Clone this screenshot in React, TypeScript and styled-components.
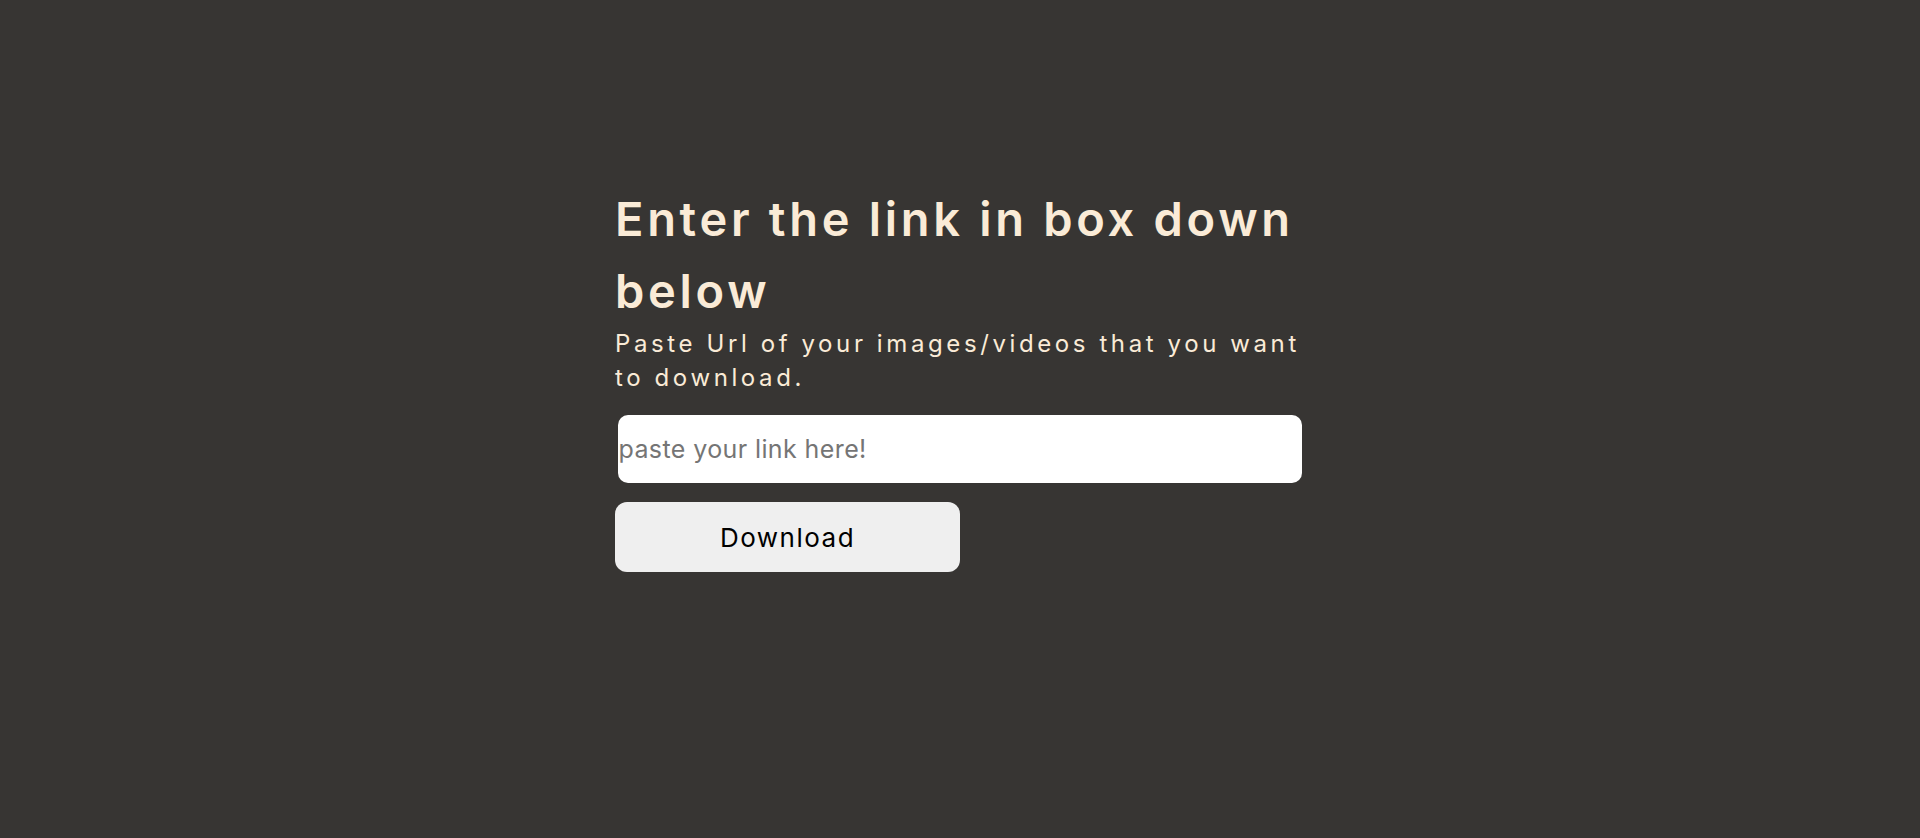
import styled, { createGlobalStyle } from 'styled-components';

const GlobalStyle = createGlobalStyle`
  html, body {
    margin: 0;
    padding: 0;
    background-color: #373533;
    font-family: Inter, 'Open Sans', sans-serif;
  }
`;

function App() {
  return (
    <>
      <GlobalStyle />
      <Page>
        <Container>
          <Title>Enter the link in box down below</Title>
          <Subtitle>Paste Url of your images/videos that you want to download.</Subtitle>
          <LinkInput type="text" placeholder="paste your link here!" />
          <DownloadBtn>Download</DownloadBtn>
        </Container>
      </Page>
    </>
  );
}

const Page = styled.main`
  min-height: 838px;
  padding-top: 183px;
  box-sizing: border-box;
`;

const Container = styled.div`
  width: 690px;
  margin: 0 auto;
  display: flex;
  flex-direction: column;
`;

const Title = styled.h1`
  margin: 0;
  color: #faebd7;
  font-size: 47px;
  font-weight: 600;
  line-height: 72px;
  letter-spacing: 3.7px;
`;

const Subtitle = styled.p`
  margin: 0 0 20px;
  color: #faebd7;
  font-size: 24px;
  font-weight: 400;
  line-height: 34px;
  letter-spacing: 3.6px;
`;

const LinkInput = styled.input`
  width: 99%;
  height: 68px;
  margin: 0 auto;
  box-sizing: border-box;
  border: none;
  border-radius: 10px;
  background-color: #ffffff;
  padding: 0;
  font-family: inherit;
  font-size: 25px;
  letter-spacing: 0.4px;
  color: #000;
  outline: none;

  &::placeholder {
    color: #757575;
  }
`;

const DownloadBtn = styled.button`
  width: 50%;
  height: 70px;
  margin-top: 19px;
  border: none;
  border-radius: 12px;
  background-color: #efefef;
  color: #000;
  font-family: inherit;
  font-size: 26px;
  letter-spacing: 1.5px;
  cursor: pointer;
`;

export default App;
